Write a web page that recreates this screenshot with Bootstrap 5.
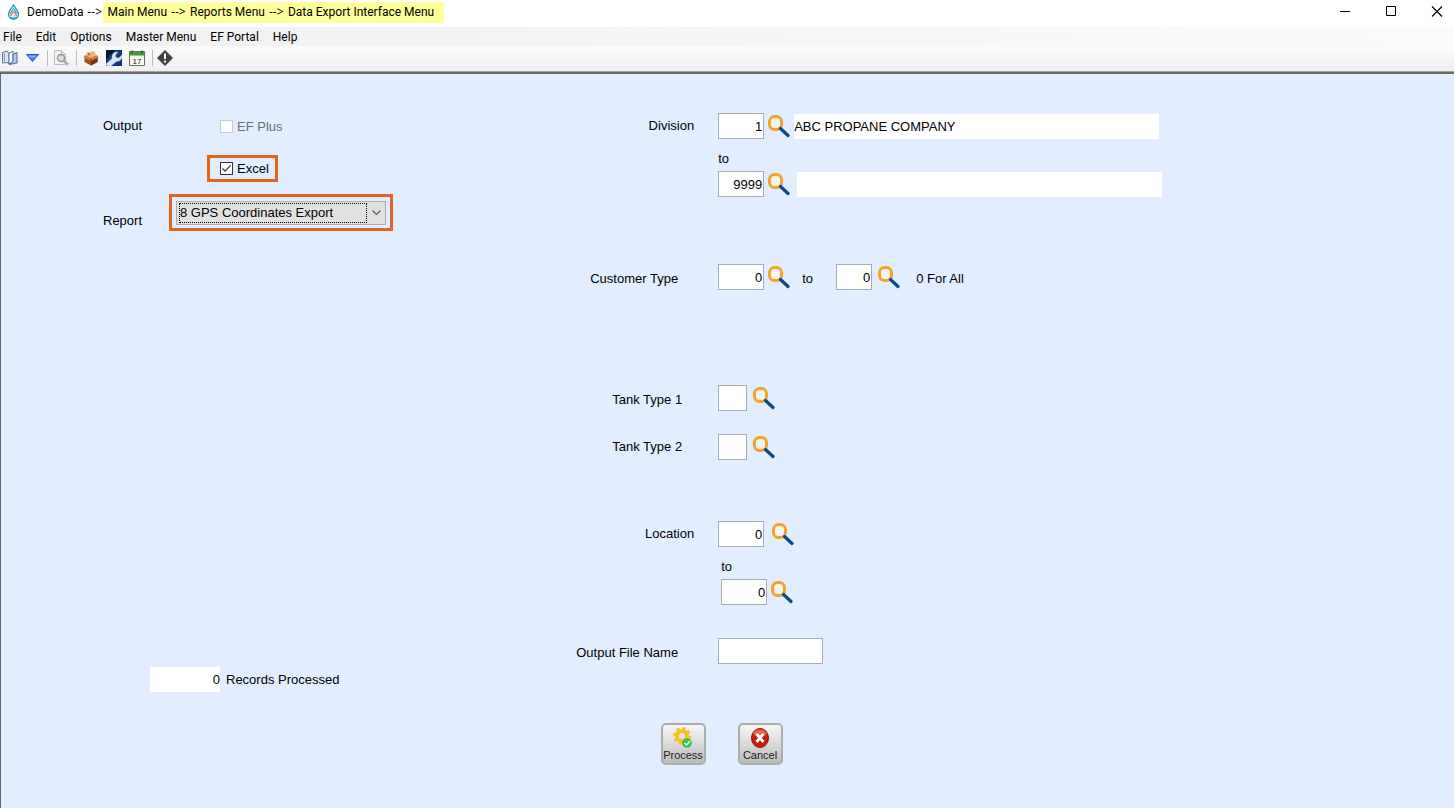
<!DOCTYPE html>
<html lang="en">
<head>
<meta charset="utf-8">
<meta name="viewport" content="width=device-width, initial-scale=1">
<title>DemoData - Data Export Interface Menu</title>
<link rel="stylesheet" href="https://cdn.jsdelivr.net/npm/bootstrap@5.3.0/dist/css/bootstrap.min.css">
<style>
body{font:13px/20px "Liberation Sans",Arial,sans-serif;color:#000;background:#e2eeff}
.chrome{font:12px/20px Roboto,"Segoe UI",sans-serif}
.chrome button{border:0;background:none;padding:0;color:#000}
.title-bar{height:27px;background:#fff;padding:0 0 3px 7px}
.crumb-set{gap:4px}
.title-bar .crumbs{padding:0 10px 0 4px;margin-left:1px;height:21px;background:#ffff9b}
.arrow{font-family:"Open Sans",sans-serif;width:15px}
.window-controls{gap:34px;padding-right:11px}
.menu-bar{height:19px;background:linear-gradient(90deg,#f0f0f0,#fbfbfb);padding-left:3px;gap:14px}
.menu-bar a{color:#000;text-decoration:none}
.tool-bar{height:28px;background:linear-gradient(#fbfbfb,#efefef);border-bottom:2px solid #696969;box-shadow:inset 0 -1px #a0a0a0;padding:0 0 2px 2px}
.divider{width:1px;height:16px;background:#bdbdbd}
.tool-gap{margin-right:7px}
.tool-gap-sm{margin-right:6px}
.workspace{border-left:1px solid #696969;min-height:calc(100vh - 74px);padding-top:39px}
.side{width:38%;padding-left:102px}
.label-wide{width:104px;padding-top:3px}
.label-narrow{width:66px}
.marked{border:3px solid #e0661f}
.check-line{height:27px;gap:4px;padding:0 6px 0 10px}
.check-line.plain{padding-left:13px;color:#6d6d6d}
.check-line input{appearance:none;width:13px;height:13px;border:1px solid #333;background:#fff;border-radius:0;margin:0}
.check-line input:disabled{border-color:#ccc}
.check-line input:checked{background:#fff url("data:image/svg+xml,%3Csvg xmlns='http://www.w3.org/2000/svg' viewBox='0 0 11 11'%3E%3Cpath d='M1.5 5.5l2.7 2.7 5.3-5.8' fill='none' stroke='%23333' stroke-width='1.2'/%3E%3C/svg%3E")}
.side-row{margin-top:15px}
.side-row-near{margin-top:12px}
.combo-mark{padding:4px;width:224px;height:37px}
.combo{border:1px solid #adadad;background:#e1e1e1;height:24px;padding:1px 4px 1px 2px}
.combo select{appearance:none;border:1px dotted #000;background:none;border-radius:0;height:20px;width:188px;padding:0;line-height:18px;color:#000}
.field{border:1px solid #abadb3;background:#fff;height:26px;border-radius:0;padding:0 1px 0 2px;text-align:right;color:#000}
.shown{border:0;background:#fff;height:25px;padding:0;color:#000}
.w-tank{width:29px}.w-type{width:36px}.w-code{width:46px}.w-file{width:105px}
.w-desc{flex:0 1 365px;min-width:0}
.w-count{width:70px}
.count-line{padding-left:47px;gap:6px}
.name{width:165px;text-align:right;flex:none}
.end-near{padding-right:24px}.end-mid{padding-right:36px}.end-far{padding-right:40px}
.low{padding-top:4px}
.form-line{height:26px}
.lookup{border:0;background:none;padding:0;width:22px;height:24px;line-height:0;flex:none;margin-left:4px}
.lookup.spaced{margin-left:6px}
.lookup.far{margin-left:8px}
.between{height:32px;padding-top:10px;margin-left:165px}
.name-inset{width:168px}
.between-inset{margin-left:168px}
.between-types{width:46px;padding-left:12px}
.desc-gap{margin-left:4px}
.desc-gap-wide{margin-left:7px}
.after-division{margin-top:67px}.after-type{margin-top:95px}.after-tank{margin-top:23px}.after-tanks{margin-top:61px}.after-location{margin-top:33px}
.main-form{padding-bottom:28px}
.actions{gap:32px;padding:31px 12px 24px 0}
.action{width:45px;height:42px;border:2px solid #adadad;border-radius:5px;background:linear-gradient(#f6f6f6,#d4d4d4 60%,#bcbcbc);padding:1px 0 0;font-size:11px;line-height:13px;color:#222}
</style>
</head>
<body>
<svg class="d-none" aria-hidden="true">
  <symbol id="magnifier" viewBox="0 0 22 24">
    <rect x="1.500" y="2.500" width="12" height="13" rx="5" fill="#f3f5f4" stroke="#f5a229" stroke-width="3"/>
    <path d="M12.5 14.5L20 21.500" stroke="#0b4a86" stroke-width="3.2" stroke-linecap="round"/>
  </symbol>
</svg>

<header class="chrome">
  <div class="title-bar d-flex align-items-center">
    <svg width="13" height="16" viewBox="0 0 13 16" class="tool-gap"><path d="M6.5 1C5 4 1.5 7 1.5 10.3a5 5 0 0 0 10 0C11.500 7 8 4 6.500 1z" fill="#c9edf9" stroke="#2793bd" stroke-width="1.300"/><path d="M6.500 4.500L3.500 9M6.500 4.500L9.500 9" stroke="#2793bd" fill="none"/><path d="M4 12V9.500l2.500-1.500L9 9.500V12" fill="none" stroke="#df6b41" stroke-width="1.200"/><path d="M3.500 13.500q3 1.500 6 0" stroke="#1683b5" fill="none"/></svg>
    <div class="crumb-set d-flex"><span>DemoData</span><span class="arrow">--&gt;</span></div>
    <div class="crumbs crumb-set d-flex"><span>Main Menu</span><span class="arrow">--&gt;</span><span>Reports Menu</span><span class="arrow">--&gt;</span><span>Data Export Interface Menu</span></div>
    <div class="window-controls d-flex ms-auto align-items-center">
      <button type="button" aria-label="Minimize" class="d-flex"><svg width="12" height="12"><path d="M1 5.500h10" stroke="#000"/></svg></button>
      <button type="button" aria-label="Maximize" class="d-flex"><svg width="12" height="12"><path d="M1.500.500h9v9h-9z" fill="none" stroke="#000"/></svg></button>
      <button type="button" aria-label="Close" class="d-flex"><svg width="12" height="12"><path d="M1 .5l10 10M11 .5l-10 10" stroke="#000" stroke-width="1.100"/></svg></button>
    </div>
  </div>
  <nav class="menu-bar d-flex align-items-center" aria-label="Menu">
    <a href="#">File</a><a href="#">Edit</a><a href="#">Options</a><a href="#">Master Menu</a><a href="#">EF Portal</a><a href="#">Help</a>
  </nav>
  <div class="tool-bar d-flex align-items-center">
    <button type="button" aria-label="Open" class="d-flex"><svg width="16" height="16" viewBox="0 0 16 16"><path d="M.5 2.500L5 1l2 2.500V14l-2-1.500-4.500.500z" fill="#dce5f5" stroke="#5c74a5"/><path d="M7 3.500L11 1v10.500L7 14z" fill="#fff" stroke="#5472aa"/><path d="M11 4l4-1.500V13l-8 1.500 4-3z" fill="#b6c8e8" stroke="#4b69a1"/><path d="M2.500 3.500v8" stroke="#8399c4"/></svg></button>
    <button type="button" aria-label="Open menu" class="d-flex ms-2"><svg width="13" height="8" viewBox="0 0 13 8"><path d="M.5.500h12l-6 7z" fill="#3e82e8" stroke="#205cc0"/><path d="M2.500 1.500h8l-1.500 2h-5z" fill="#78b3fa"/></svg></button>
    <span class="divider ms-2 me-1"></span>
    <button type="button" aria-label="Preview" class="d-flex tool-gap-sm" disabled><svg width="18" height="16" viewBox="0 0 18 16"><path d="M2.500.500h7l4 4v10h-11z" fill="#f3f3f3" stroke="#bcbcbc"/><path d="M9.500.500v4h4" fill="none" stroke="#bcbcbc"/><circle cx="9" cy="8" r="3.500" fill="#ddd" stroke="#999" stroke-width="1.500"/><path d="M11.500 10.500l4.500 4" stroke="#aaa" stroke-width="2.500"/></svg></button>
    <span class="divider tool-gap-sm"></span>
    <button type="button" aria-label="Products" class="d-flex tool-gap"><svg width="16" height="16" viewBox="0 0 16 16"><path d="M1.500 6L8 8.500 14.500 6v6L8 15.500 1.500 12z" fill="#a64c22"/><path d="M8 8.500L14.500 6v6L8 15.500z" fill="#75300f"/><path d="M3 6l1-4 3 1 2-2 3 1 1 4-5 2z" fill="#e9b679"/><path d="M.5 7.500L2 5l6 3-1 2.500zM15.500 7.500L14 5 8 8l1 2.500z" fill="#cf7a40"/><circle cx="6" cy="4" r="1.500" fill="#b97938"/></svg></button>
    <button type="button" aria-label="Settings" class="d-flex tool-gap"><svg width="16" height="16" viewBox="0 0 16 16"><path d="M0 0h16v16H0z" fill="#153572"/><path d="M0 0h9L0 9z" fill="#07142e"/><path d="M0 14l6-5.500C5.500 4 8 1.500 12 2L9.500 5l.5 2.500 2.500.500L16 5c.500 4-2 6.500-5.500 6.500L5 16H1z" fill="#dce8fa" stroke="#86a9dc" stroke-width=".6"/></svg></button>
    <button type="button" aria-label="Calendar" class="d-flex tool-gap"><svg width="16" height="16" viewBox="0 0 16 16"><path d="M.5 1.500h15v14H.500z" fill="#f8fbf3" stroke="#63745a"/><path d="M1 2h14v4H1z" fill="#459f2e"/><path d="M3 .500v3M13 .500v3" stroke="#36592b" stroke-width="1.500"/><path d="M1 5.500h14" stroke="#8fce7c"/><text x="8" y="14" text-anchor="middle" font-size="8" font-family="Liberation Sans,sans-serif" fill="#222">17</text></svg></button>
    <span class="divider me-1"></span>
    <button type="button" aria-label="Alerts" class="d-flex"><svg width="16" height="16" viewBox="0 0 16 16"><path d="M8 0l8 8-8 8-8-8z" fill="#3f4245"/><path d="M8 3.500V9M8 10.500v2" stroke="#fff" stroke-width="2"/></svg></button>
  </div>
</header>

<main class="workspace">
<form>
  <div class="d-flex">
    <section class="side d-flex flex-column">
      <div class="d-flex">
        <span class="label-wide">Output</span>
        <div class="check-line plain d-flex align-items-center"><input type="checkbox" id="plus" disabled><label for="plus">EF Plus</label></div>
      </div>
      <div class="d-flex side-row">
        <span class="label-wide"></span>
        <div class="check-line marked d-flex align-items-center"><input type="checkbox" id="excel" checked><label for="excel">Excel</label></div>
      </div>
      <div class="d-flex align-items-end side-row-near">
        <label class="label-narrow" for="report">Report</label>
        <div class="combo-mark marked"><div class="combo d-flex align-items-center justify-content-between">
          <select id="report"><option>8 GPS Coordinates Export</option></select>
          <svg width="9" height="6" viewBox="0 0 9 6"><path d="M.5.500l4 4 4-4" fill="none" stroke="#555" stroke-width="1.200"/></svg>
        </div></div>
      </div>
      <div class="d-flex align-items-center mt-auto count-line">
        <input class="shown w-count text-end" id="count" value="0" readonly><label for="count">Records Processed</label>
      </div>
    </section>

    <section class="main-form flex-grow-1">
      <div class="form-line d-flex align-items-center">
        <label class="name end-near" for="div1">Division</label>
        <input class="field w-code" id="div1" value="1">
        <button type="button" class="lookup" aria-label="Find division"><svg width="22" height="24"><use href="#magnifier"/></svg></button>
        <input class="shown w-desc desc-gap" value="ABC PROPANE COMPANY" aria-label="Division name" readonly>
      </div>
      <div class="between"><label for="div2">to</label></div>
      <div class="form-line d-flex align-items-center">
        <span class="name"></span>
        <input class="field w-code" id="div2" value="9999">
        <button type="button" class="lookup" aria-label="Find last division"><svg width="22" height="24"><use href="#magnifier"/></svg></button>
        <input class="shown w-desc desc-gap-wide" aria-label="Last division name" readonly>
      </div>
      <div class="form-line d-flex align-items-center after-division">
        <label class="name end-far low" for="type1">Customer Type</label>
        <input class="field w-code" id="type1" value="0">
        <button type="button" class="lookup" aria-label="Find customer type"><svg width="22" height="24"><use href="#magnifier"/></svg></button>
        <label for="type2" class="between-types low">to</label>
        <input class="field w-type" id="type2" value="0">
        <button type="button" class="lookup spaced" aria-label="Find last customer type"><svg width="22" height="24"><use href="#magnifier"/></svg></button>
        <span class="ms-3 low">0 For All</span>
      </div>
      <div class="form-line d-flex align-items-center after-type">
        <label class="name end-mid low" for="tank1">Tank Type 1</label>
        <input class="field w-tank" id="tank1">
        <button type="button" class="lookup spaced" aria-label="Find tank type 1"><svg width="22" height="24"><use href="#magnifier"/></svg></button>
      </div>
      <div class="form-line d-flex align-items-center after-tank">
        <label class="name end-mid" for="tank2">Tank Type 2</label>
        <input class="field w-tank" id="tank2">
        <button type="button" class="lookup spaced" aria-label="Find tank type 2"><svg width="22" height="24"><use href="#magnifier"/></svg></button>
      </div>
      <div class="form-line d-flex align-items-center after-tanks">
        <label class="name end-near" for="loc1">Location</label>
        <input class="field w-code" id="loc1" value="0">
        <button type="button" class="lookup far" aria-label="Find location"><svg width="22" height="24"><use href="#magnifier"/></svg></button>
      </div>
      <div class="between between-inset"><label for="loc2">to</label></div>
      <div class="form-line d-flex align-items-center">
        <span class="name name-inset"></span>
        <input class="field w-code" id="loc2" value="0">
        <button type="button" class="lookup" aria-label="Find last location"><svg width="22" height="24"><use href="#magnifier"/></svg></button>
      </div>
      <div class="form-line d-flex align-items-center after-location">
        <label class="name end-far low" for="file">Output File Name</label>
        <input class="field w-file" id="file">
      </div>
    </section>
  </div>
  <div class="actions d-flex justify-content-center">
    <button type="button" class="action d-flex flex-column align-items-center"><svg width="20" height="23" viewBox="0 0 20 23"><circle cx="9" cy="10" r="7" fill="none" stroke="#fbc21f" stroke-width="4" stroke-dasharray="2.900 2.598"/><circle cx="9" cy="10" r="5" fill="none" stroke="#fbc21f" stroke-width="4"/><circle cx="14" cy="17" r="4.800" fill="#2fc653"/><path d="M11.500 17l2 2 3.500-4" fill="none" stroke="#fff" stroke-width="1.500"/></svg>Process</button>
    <button type="button" class="action d-flex flex-column align-items-center"><svg width="20" height="23" viewBox="0 0 20 23"><ellipse cx="10" cy="12" rx="8.500" ry="9.500" fill="#c51e13" stroke="#8f1710"/><path d="M3 8a7.500 7 0 0 1 14 0q-7 4-14 0z" fill="#e4694d"/><path d="M6.500 8l7 8M13.500 8l-7 8" stroke="#fff" stroke-width="2.800"/></svg>Cancel</button>
  </div>
</form>
</main>
<script src="https://cdn.jsdelivr.net/npm/bootstrap@5.3.0/dist/js/bootstrap.bundle.min.js"></script>
</body>
</html>
